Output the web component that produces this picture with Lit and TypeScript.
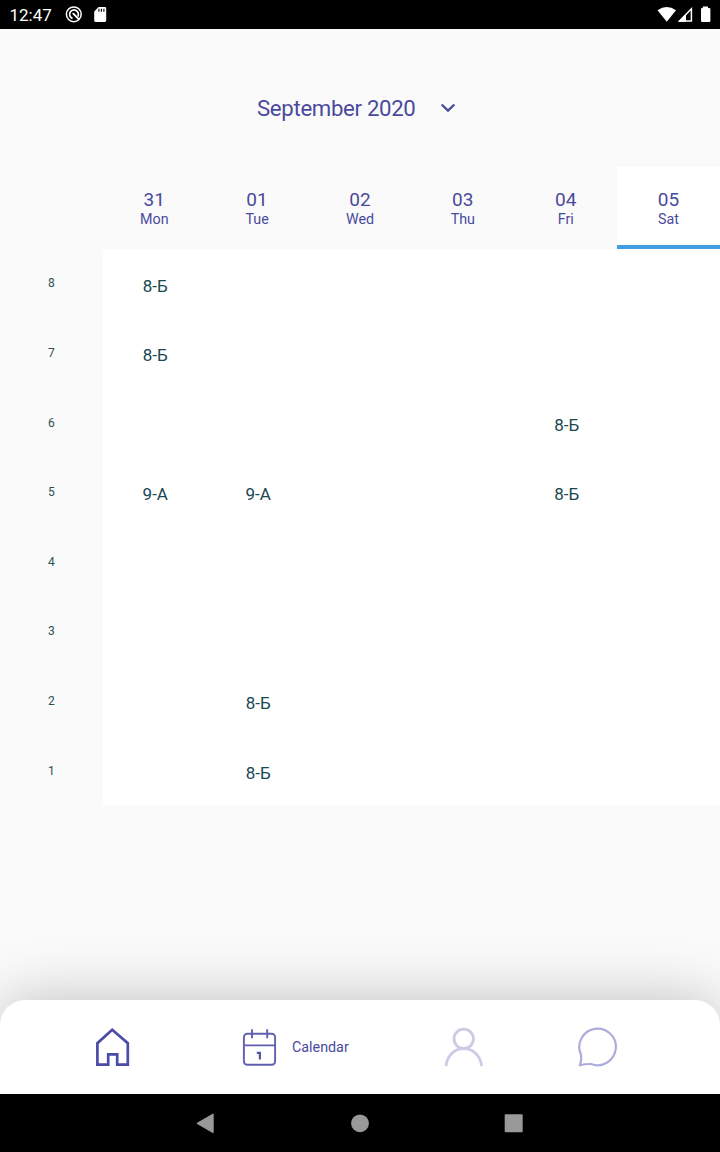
import { LitElement, html, css, svg } from "lit";
import { customElement } from "lit/decorators.js";
import { classMap } from "lit/directives/class-map.js";

const DAYS = [
  { date: "31", name: "Mon" },
  { date: "01", name: "Tue" },
  { date: "02", name: "Wed" },
  { date: "03", name: "Thu" },
  { date: "04", name: "Fri" },
  { date: "05", name: "Sat", active: true },
];

const LESSONS = [
  { n: 8, cells: ["8-Б", "", "", "", "", ""] },
  { n: 7, cells: ["8-Б", "", "", "", "", ""] },
  { n: 6, cells: ["", "", "", "", "8-Б", ""] },
  { n: 5, cells: ["9-А", "9-А", "", "", "8-Б", ""] },
  { n: 4, cells: ["", "", "", "", "", ""] },
  { n: 3, cells: ["", "", "", "", "", ""] },
  { n: 2, cells: ["", "8-Б", "", "", "", ""] },
  { n: 1, cells: ["", "8-Б", "", "", "", ""] },
];

@customElement("status-bar")
class StatusBar extends LitElement {
  static styles = css`
    :host { display: flex; align-items: center; height: 28.5px; background: #000; color: #fff; flex: none; }
    .time { font-size: 17px; line-height: 20px; padding: 2px 0 0 9.5px; width: 65px; box-sizing: border-box; white-space: nowrap; }
    .left { width: 48px; height: 28px; }
    .right { width: 60px; height: 28px; margin-left: auto; }
  `;
  render() {
    return html`
      <div class="time">12:47</div>
      <svg class="left" viewBox="65 0 48 28" fill="none">
        <circle cx="73.8" cy="14.3" r="7.4" stroke="#fff" stroke-width="1.5" />
        <path d="M77.8 16.6A4.4 4.4 0 1 0 72.6 18.5" stroke="#fff" stroke-width="1.7" />
        <path d="M72.8 13.2L79.2 19.6" stroke="#fff" stroke-width="1.9" />
        <path d="M98.6 7H104.8Q106.2 7 106.2 8.4V20.6Q106.2 22 104.8 22H95.6Q94.2 22 94.2 20.6V11.4Z" fill="#fff" />
        <path d="M98.9 8.7V11.8M101.4 8.7V11.8M103.9 8.7V11.8" stroke="#000" stroke-width="1.1" />
      </svg>
      <svg class="right" viewBox="660 0 60 28" overflow="visible">
        <path d="M657.5 10.2Q666.8 3.8 676 10.2L666.8 21.8Z" fill="#fff" />
        <path d="M691.4 8.8V21H679.6Z" fill="none" stroke="#fff" stroke-width="1.5" />
        <path d="M678 21.8L686 13.8V21.8Z" fill="#fff" />
        <path d="M702.8 8V6.5H708V8H709.2Q710.4 8 710.4 9.2V20.8Q710.4 22 709.2 22H702.2Q701 22 701 20.8V9.2Q701 8 702.2 8Z" fill="#fff" />
      </svg>
    `;
  }
}

@customElement("week-schedule")
class WeekSchedule extends LitElement {
  static styles = css`
    :host { display: block; }
    .row { display: grid; grid-template-columns: repeat(7, 1fr); }
    .head { height: 82px; color: #4a4a9c; }
    .day { display: flex; flex-direction: column; align-items: center; padding-top: 21px; box-sizing: border-box; border-bottom: 4px solid transparent; }
    .day.active { background: #fff; border-color: #419de0; }
    .date { font-size: 19px; line-height: 23px; letter-spacing: 0.1px; }
    .name { font-size: 14.3px; line-height: 17px; }
    .lesson { height: 69.6px; }
    .num { display: flex; align-items: center; justify-content: center; font-size: 12px; color: #2b5157; padding-bottom: 0.8px; }
    .cell { display: flex; align-items: center; justify-content: center; background: #fff; font-size: 17px; color: #184850; padding: 3.6px 0 0 2px; }
  `;
  render() {
    return html`
      <div class="row head">
        <div></div>
        ${DAYS.map((d) => html`
          <div class=${classMap({ day: true, active: !!d.active })}>
            <div class="date">${d.date}</div>
            <div class="name">${d.name}</div>
          </div>`)}
      </div>
      ${LESSONS.map((l) => html`
        <div class="row lesson">
          <div class="num">${l.n}</div>
          ${l.cells.map((c) => html`<div class="cell">${c}</div>`)}
        </div>`)}
    `;
  }
}

const ICONS = {
  home: svg`<path d="M22.2 4.8L37.8 18.2V39.6H27.2V29.3H18.2V39.6H7.4V18.2Z" stroke="#4b4ba8" stroke-width="2.7" />`,
  calendar: svg`
    <rect x="6.9" y="8.8" width="31.2" height="31" rx="3.4" stroke="#6060ae" stroke-width="1.9" />
    <path d="M6.9 20.4H38.1M15 4.2V13.2M30.2 4.2V13.2" stroke="#6060ae" stroke-width="1.9" />
    <path d="M19.8 27.8H22.9V34.4" stroke="#5555a5" stroke-width="2.2" />`,
  person: svg`<g stroke="#cccbe6" stroke-width="2.8">
    <circle cx="21.7" cy="13.8" r="9.7" />
    <path d="M4 41C5 30.5 12.5 23.7 21.7 23.7S38.6 30.5 39.6 41" /></g>`,
  chat: svg`<path d="M4.9 29.4A18.3 18.3 0 1 1 15.1 39Q9.7 38.8 3.8 40.3Q5.9 34.5 4.9 29.4Z" stroke="#adaddb" stroke-width="2.2" stroke-linejoin="round" />`,
};

@customElement("tab-bar")
class TabBar extends LitElement {
  static styles = css`
    :host { display: flex; align-items: center; height: 94px; box-sizing: border-box; padding: 0 100px 0 90px; background: #fff; border-radius: 25px 25px 0 0; box-shadow: 0 0 60px rgba(0, 0, 0, 0.24); flex: none; }
    svg { width: 44px; height: 44px; fill: none; flex: none; }
    .current { display: flex; align-items: center; margin-left: 103px; width: 205px; }
    .label { margin-left: 11px; font-size: 14.3px; color: #4a4a9c; }
    .chat { margin-left: 90px; }
  `;
  render() {
    return html`
      <svg viewBox="0 0 44 44">${ICONS.home}</svg>
      <div class="current">
        <svg viewBox="0 0 44 44">${ICONS.calendar}</svg>
        <span class="label">Calendar</span>
      </div>
      <svg viewBox="0 0 44 44">${ICONS.person}</svg>
      <svg class="chat" viewBox="0 0 44 44">${ICONS.chat}</svg>
    `;
  }
}

@customElement("system-nav")
class SystemNav extends LitElement {
  static styles = css`
    :host { display: flex; justify-content: center; align-items: center; height: 58px; background: #000; position: relative; flex: none; }
    svg { width: 360px; height: 58px; fill: #999; }
  `;
  render() {
    return html`<svg viewBox="180 0 360 58">
      <path d="M197.5 29.3L213 20.3V38.3Z" stroke="#999" stroke-width="1.4" stroke-linejoin="round" />
      <circle cx="360" cy="29.3" r="8.9" />
      <rect x="504.7" y="20.3" width="18" height="18" rx="1" />
    </svg>`;
  }
}

@customElement("app-root")
class AppRoot extends LitElement {
  static styles = css`
    :host { display: flex; flex-direction: column; height: 1152px; overflow: hidden; background: #fafafa; font-family: Roboto, sans-serif; }
    .month { display: flex; align-items: center; height: 138.5px; flex: none; box-sizing: border-box; padding: 20px 0 0 257px; color: #4a4a9c; font-size: 22.2px; letter-spacing: -0.32px; }
    .month svg { width: 16px; height: 12px; margin-left: 24.5px; fill: none; }
    .space { flex: 1; }
  `;
  render() {
    return html`
      <status-bar></status-bar>
      <div class="month">
        <span>September 2020</span>
        <svg viewBox="0 0 16 12"><path d="M1.6 2.5L8 8.7L14.4 2.5" stroke="#4a4a9c" stroke-width="2.3" /></svg>
      </div>
      <week-schedule></week-schedule>
      <div class="space"></div>
      <tab-bar></tab-bar>
      <system-nav></system-nav>
    `;
  }
}
